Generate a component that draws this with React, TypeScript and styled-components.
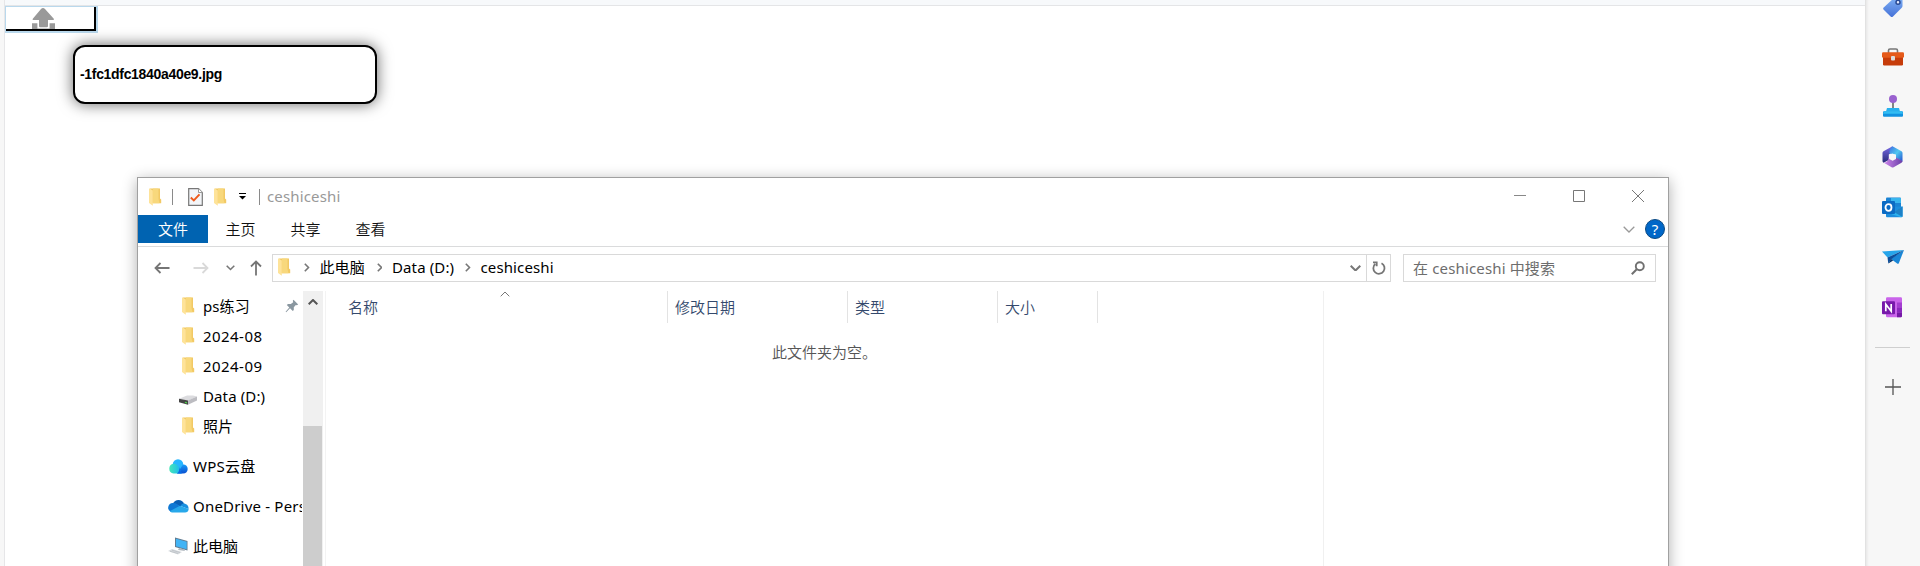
import React from "react";
import styled, { createGlobalStyle } from "styled-components";

const GlobalStyle = createGlobalStyle`
  * { box-sizing: border-box; }
  body { margin: 0; background: #fff; overflow: hidden; }
  svg { display: block; flex: none; }
`;

const uiFont = `"Noto Sans", "Noto Sans CJK SC", sans-serif`;
const cjkFont = `"Noto Sans CJK SC", "Noto Sans", sans-serif`;

const Browser = styled.div`
  display: flex;
  width: 1920px;
  height: 566px;
  background: #f7f7f7;
  overflow: hidden;
  font-family: ${uiFont};
`;

const Page = styled.main`
  position: relative;
  flex: 1;
  margin-left: 4px;
  border-left: 1px solid #e6e6e8;
  border-right: 1px solid #e2e2e2;
  background: #fff;
`;

const TopStrip = styled.div`
  height: 6px;
  background: #f7f9fb;
  border-bottom: 1px solid #e4e5e7;
`;

const UploadFrame = styled.div`
  width: 93px;
  height: 27px;
  border: solid #b9d8ec;
  border-width: 1px 2px 2px 1px;
`;

const UploadButton = styled.button`
  display: block;
  width: 100%;
  height: 100%;
  padding: 1px 0 0 26px;
  border: solid #000;
  border-width: 0 2px 2px 0;
  background: #fff;
  overflow: hidden;
`;

const FileCard = styled.div`
  position: absolute;
  left: 68px;
  top: 45px;
  width: 304px;
  height: 59px;
  display: flex;
  align-items: center;
  padding: 0 5px 2px;
  border: 2px solid #000;
  border-radius: 12px;
  background: #fff;
  box-shadow: 0 0 15px rgba(0, 0, 0, 0.6);
  font: bold 14px "Liberation Sans", Arial, sans-serif;
  letter-spacing: -0.32px;
  color: #000;
`;

const Explorer = styled.section`
  position: absolute;
  left: 132px;
  top: 177px;
  width: 1532px;
  height: 600px;
  display: flex;
  flex-direction: column;
  border: 1px solid #a0a0a0;
  background: #fff;
  box-shadow: 0 3px 14px rgba(0, 0, 0, 0.32);
  font-size: 15px;
  line-height: 20px;
  color: #000;
`;

const TitleBar = styled.header`
  display: flex;
  align-items: center;
  height: 37px;
  padding: 0 24px 0 11px;
`;

const TitleMark = styled.i<{ $ml: number; $mr: number }>`
  width: 1px;
  height: 16px;
  margin: 0 ${(p) => p.$mr}px 0 ${(p) => p.$ml}px;
  background: #8a8a8a;
`;

const TitleText = styled.span`
  padding-bottom: 2px;
  color: #999;
  letter-spacing: 0.15px;
`;

const WindowControls = styled.div`
  display: flex;
  gap: 47px;
  margin-left: auto;
  padding-bottom: 1px;
`;

const Ribbon = styled.nav`
  display: flex;
  align-items: center;
  height: 32px;
  padding: 0 3px 3px 0;
  border-bottom: 1px solid #dadbdc;
`;

const Tab = styled.span<{ $active?: boolean }>`
  width: ${(p) => (p.$active ? 70 : 65)}px;
  height: 28px;
  line-height: 28px;
  text-align: center;
  background: ${(p) => (p.$active ? "#0063b1" : "transparent")};
  color: ${(p) => (p.$active ? "#fff" : "#111")};
  font-family: ${cjkFont};
  font-weight: 350;
`;

const RibbonEnd = styled.div`
  display: flex;
  align-items: center;
  gap: 10px;
  margin-left: auto;
`;

const HelpBadge = styled.span`
  width: 20px;
  height: 20px;
  border-radius: 50%;
  border: 1px solid #0b4a84;
  background: #0067c8;
  color: #fff;
  text-align: center;
  font-size: 15px;
  line-height: 18px;
`;

const AddressRow = styled.div`
  display: flex;
  align-items: center;
  height: 44px;
  padding: 0 12px 2px 16px;
`;

const NavButtons = styled.div`
  display: flex;
  align-items: center;
  width: 118px;
`;

const Field = styled.div<{ $w: number }>`
  display: flex;
  align-items: center;
  width: ${(p) => p.$w}px;
  height: 28px;
  border: 1px solid #d9d9d9;
`;

const AddressField = styled(Field)`
  padding-left: 5px;
`;

const AddressPath = styled.div`
  display: flex;
  align-items: center;
  padding-bottom: 2px;
`;

const SearchField = styled(Field)`
  margin-left: 12px;
  padding: 0 10px 0 9px;
  color: #6d6d6d;
  letter-spacing: 0.15px;
  justify-content: space-between;
`;

const Crumb = styled.span<{ $w: number }>`
  width: ${(p) => p.$w}px;
  margin: 0 11px 0 10px;
  letter-spacing: 0.12px;
  white-space: nowrap;
`;

const AddressEnd = styled.div`
  display: flex;
  align-items: center;
  align-self: stretch;
  margin-left: auto;
`;

const RefreshCell = styled.div`
  display: flex;
  align-items: center;
  justify-content: center;
  align-self: stretch;
  width: 24px;
  margin-left: 5px;
  border-left: 1px solid #d9d9d9;
`;

const Body = styled.div`
  display: flex;
  flex: 1;
  min-height: 0;
`;

const Tree = styled.aside`
  width: 164px;
  overflow: hidden;
`;

const TreeRow = styled.div<{ $root?: boolean }>`
  display: flex;
  align-items: center;
  height: 30px;
  margin-top: ${(p) => (p.$root ? 10 : 0)}px;
  padding-left: ${(p) => (p.$root ? 29 : 39)}px;
  white-space: nowrap;
`;

const TreeIcon = styled.span<{ $drop?: number }>`
  display: flex;
  justify-content: center;
  flex: none;
  width: 22px;
  margin-right: 4px;
  padding-top: ${(p) => p.$drop ?? 0}px;
`;

const TreeLabel = styled.span<{ $track?: number }>`
  padding-bottom: 1px;
  letter-spacing: ${(p) => p.$track ?? 0}px;
`;

const PinSlot = styled.span`
  margin-left: auto;
  margin-right: 3px;
`;

const Scrollbar = styled.div`
  width: 20px;
  margin-left: 1px;
  background: #f0f0f0;
`;

const ScrollUp = styled.div`
  display: flex;
  justify-content: center;
  height: 135px;
  padding-top: 8px;
`;

const ScrollThumb = styled.div`
  width: 19px;
  height: 400px;
  background: #cdcdcd;
`;

const FileList = styled.div`
  display: flex;
  flex-direction: column;
  width: 999px;
  margin-left: 2px;
  border-left: 1px solid #f3f3f3;
  border-right: 1px solid #f0f0f0;
  font-family: ${cjkFont};
  font-weight: 350;
`;

const Columns = styled.div`
  display: flex;
  height: 32px;
`;

const Column = styled.div<{ $w: number; $pad: number }>`
  position: relative;
  width: ${(p) => p.$w}px;
  padding-left: ${(p) => p.$pad}px;
  border-right: 1px solid #e3e3e3;
  line-height: 32px;
  color: #34496c;
`;

const SortMark = styled.span`
  position: absolute;
  left: 174px;
  top: 0;
`;

const EmptyNote = styled.p`
  margin: 19px 0 0 446px;
  color: #555;
`;

const EdgeBar = styled.aside`
  display: flex;
  flex-direction: column;
  align-items: center;
  width: 54px;
  padding-right: 1px;
  background: #f7f7f7;
  box-shadow: inset 3px 0 3px -2px rgba(0, 0, 0, 0.08);
`;

const EdgeSlot = styled.div`
  display: flex;
  align-items: center;
  justify-content: center;
  flex: none;
  height: 50px;
  &:first-child { margin-top: -18px; }
`;

const EdgeRule = styled.i`
  width: 35px;
  height: 1px;
  margin: 15px 0 31px;
  background: #cfcfcf;
`;

const Gap = styled.i<{ $w: number }>`
  flex: none;
  width: ${(p) => p.$w}px;
`;

const Folder = () => (
  <svg width="13" height="18" viewBox="0 0 13 18">
    <path d="M1 .5H11V10.5L12.2 11.5V15.2H3Z" fill="#f2c964" />
    <path d="M4 .5H9.5V11L10.5 15.2H4Z" fill="#f8d87c" />
    <path d="M0 .3L3.8 2.5V17.8L0 15Z" fill="#fee399" />
  </svg>
);

const CheckDoc = () => (
  <svg width="15" height="18" viewBox="0 0 15 18">
    <path d="M.7.7H10.5L14.3 4.5V17.3H.7Z" fill="#f3f5f8" stroke="#777" strokeWidth="1.2" />
    <path d="M10.5.7V4.5H14.3" fill="#fff" stroke="#999" />
    <path d="M2.8 9.5L5.8 12.5L11.5 6.3" fill="none" stroke="#ee5a1c" strokeWidth="1.9" />
  </svg>
);

const Chevron = ({ dir, w = 10, color = "#666", sw = 1.6 }: { dir: "up" | "down" | "right"; w?: number; color?: string; sw?: number }) => {
  const h = w / 2 + 1;
  const paths = {
    up: `M.7 ${h - 0.7}L${w / 2} 1L${w - 0.7} ${h - 0.7}`,
    down: `M.7 .8L${w / 2} ${h - 1}L${w - 0.7} .8`,
    right: `M.8 .7L${h - 1} ${w / 2}L.8 ${w - 0.7}`,
  };
  const side = dir === "right";
  return (
    <svg width={side ? h : w} height={side ? w : h}>
      <path d={paths[dir]} fill="none" stroke={color} strokeWidth={sw} />
    </svg>
  );
};

const Arrow = ({ dir, color }: { dir: "left" | "right" | "up"; color: string }) => {
  const turn = { left: 0, up: 90, right: 180 }[dir];
  return (
    <svg width="16" height="16" viewBox="0 0 16 16">
      <path transform={`rotate(${turn} 8 8)`} d="M15.5 8H1.5M6.5 3L1.5 8L6.5 13" fill="none" stroke={color} strokeWidth="1.8" />
    </svg>
  );
};

const Drive = () => (
  <svg width="18" height="10" viewBox="0 0 18 10">
    <path d="M0 3.8L8 .5H14L18 1.5L9 5.8Z" fill="#dcdcdf" />
    <path d="M9 5.6L18 1.5V5.5L9 9.8Z" fill="#bcbcc1" />
    <path d="M0 3.8L9 5.6V9.8L0 7.2Z" fill="#444" />
    <path d="M6 7.3L8 7.8" stroke="#4fd04a" strokeWidth="1.3" />
  </svg>
);

const WpsCloud = () => (
  <svg width="20" height="15" viewBox="0 0 20 15">
    <defs>
      <linearGradient id="wpsA"><stop stopColor="#45e8b8" /><stop offset="1" stopColor="#18b4f4" /></linearGradient>
      <linearGradient id="wpsB" x1="0" y1="0" x2="0" y2="1"><stop stopColor="#189bf8" /><stop offset="1" stopColor="#0a4fd0" /></linearGradient>
    </defs>
    <circle cx="10" cy="5.5" r="5.3" fill="#27b6ff" />
    <path d="M9 14.5L15 5.5C18 5.5 19.7 7.6 19.7 10S18 14.5 15 14.5Z" fill="url(#wpsB)" />
    <path d="M5.5 4.8C9 4.8 10.5 7 12 10.5L13.5 14.5H5.5A4.9 4.9 0 0 1 5.5 4.8Z" fill="url(#wpsA)" />
    <path d="M11 8L13.8 14.5H9C11 13 11.8 11 11 8Z" fill="#0b66e6" />
  </svg>
);

const OneDrive = () => (
  <svg width="21" height="14" viewBox="0 0 21 14">
    <path d="M5 4.5A6 6 0 0 1 16 4.5L12.5 7.5L5 4.5Z" fill="#0a5fb4" />
    <path d="M4.8 4C8 3.5 9 5.5 13 7.5L3 13A4.7 4.7 0 0 1 4.8 4Z" fill="#0f78d4" />
    <path d="M12.5 7C14 4.5 16 4 17.5 5C20 6 20.7 7.5 20.5 10Z" fill="#1890e0" />
    <path d="M2 12L12 6.8L20.7 10C20.5 12.5 19 13.5 17 13.5H5C3.5 13.5 2.5 13 2 12Z" fill="#28a8ea" />
  </svg>
);

const Computer = () => (
  <svg width="20" height="18" viewBox="0 0 20 18">
    <path d="M7 .5L19.5 4V13.5L7 10Z" fill="#607b90" />
    <path d="M8 1.8L18.7 4.7V12.2L8 9.2Z" fill="#42b4f5" />
    <path d="M11 11L16 12.3L17 14L10 13Z" fill="#aeb6bd" />
    <path d="M0 14L4 12L14 15L10 17.5Z" fill="#d6dade" />
    <path d="M2 14.3L10 16.5M4 13.2L12 15.5" stroke="#b3b9be" strokeWidth=".6" />
  </svg>
);

const Pin = () => (
  <svg width="14" height="14" viewBox="0 0 14 14">
    <path d="M8.5.8L13.2 5.5L11.8 6.2L10.8 6L8.8 8.3L8.8 11L7.8 12L5 9.2L1.2 13.2L.6 12.8L4.3 8.5L1.8 6L3 5H5.8L8.2 3.2L7.8 1.8Z" fill="#8a97a0" />
  </svg>
);

const UploadGlyph = () => (
  <svg width="23" height="22" viewBox="0 0 23 22">
    <path d="M11 0Q12 0 13 1L21.8 10.8Q22.5 12 21 12H16V18Q16 19.2 14.8 19.2H8.2Q7 19.2 7 18V12H1.3Q0 12 .8 10.8L9 1Q10 0 11 0Z" fill="#999" />
    <path d="M0 15.2H5.4V20.4H17.6V15.2H23V22H0Z" fill="#999" />
  </svg>
);

const Tag = () => (
  <svg width="22" height="22" viewBox="0 0 22 22">
    <defs><linearGradient id="tag" x1="0" y1="0" x2="0" y2="1"><stop stopColor="#7eb0f4" /><stop offset="1" stopColor="#4672d8" /></linearGradient></defs>
    <path d="M12 2L19 1.5Q20.5 1.5 20.5 3V10Q20.5 11 19.5 12L11 20.5Q9.8 21.5 8.6 20.5L1.7 13.8Q.6 12.6 1.7 11.4Z" fill="url(#tag)" />
    <circle cx="16" cy="6.3" r="2" fill="#e4ecff" stroke="#294a94" strokeWidth="1.5" />
  </svg>
);

const Toolbox = () => (
  <svg width="22" height="18" viewBox="0 0 22 18">
    <path d="M6.5 5V2.5Q6.5 1 8 1H14Q15.5 1 15.5 2.5V5" fill="none" stroke="#777" strokeWidth="1.6" />
    <rect x="1" y="8" width="20" height="9.5" rx="1.2" fill="#c63c0a" />
    <rect y="4.2" width="22" height="5.6" rx="1.2" fill="#e55a1a" />
    <rect x="9" y="8" width="4" height="4.6" rx="1" fill="#dcdcdc" />
  </svg>
);

const Joystick = () => (
  <svg width="22" height="24" viewBox="0 0 22 24">
    <path d="M11 7V15" stroke="#777" strokeWidth="1.8" />
    <circle cx="11" cy="4.1" r="4" fill="#9a62cf" />
    <path d="M5 13H17L18 16.5H4Z" fill="#28b1ee" />
    <rect x="1" y="16.2" width="20" height="5.6" rx="1" fill="#1292e0" />
    <path d="M2 16.2H20L21 18.8H1Z" fill="#32bdf3" />
  </svg>
);

const M365 = () => (
  <svg width="21" height="22" viewBox="0 0 21 22">
    <defs>
      <linearGradient id="mA" x1="0" y1="0" x2="0" y2="1"><stop stopColor="#7a6ae6" /><stop offset="1" stopColor="#262a78" /></linearGradient>
      <linearGradient id="mB" x1="0" y1="0" x2="1" y2="1"><stop stopColor="#3b6fe0" /><stop offset=".5" stopColor="#50c8f0" /><stop offset="1" stopColor="#2450d0" /></linearGradient>
      <linearGradient id="mC" x1="0" y1="0" x2="1" y2="0"><stop stopColor="#d48af0" /><stop offset="1" stopColor="#6a3fa8" /></linearGradient>
    </defs>
    <path d="M10.5 .3L1.5 5.3Q.5 6 .5 7V15Q.5 16.3 1.5 16.7L6.8 14V8.5L12.5 5Z" fill="url(#mA)" />
    <path d="M10 .5Q10.6 .2 11.4 .7L19.5 5.3Q20.5 6 20.5 7V15.5L14 12V8.5L7.5 7.5Q7 3 10 .5Z" fill="url(#mB)" />
    <path d="M1 16.2Q5.5 17.5 6.8 12L10.5 14.2L14 11.5L20.5 15Q20.4 16.3 19.5 16.8L11.6 21.3Q10.6 21.8 9.6 21.3Z" fill="url(#mC)" />
    <path d="M10.6 7.4L14 9.2V12.9L10.6 14.7L7.2 12.9V9.2Z" fill="#f7f7f7" />
  </svg>
);

const Outlook = () => (
  <svg width="21" height="21" viewBox="0 0 21 21">
    <rect x="4" y=".5" width="15" height="12" rx="1" fill="#1a83d4" />
    <rect x="9" y="1" width="10" height="5" fill="#38b5ee" />
    <path d="M4 10L20.5 9.5V19Q20.5 20.3 19 20.3H5Q4 20.3 4 19Z" fill="#1c8ddd" />
    <path d="M20.5 9.5L9 17L19 20.3Q20.5 20.3 20.5 19Z" fill="#2bb0ee" />
    <path d="M12 15L20.5 20V9.5Z" fill="#125ba8" opacity=".55" />
    <rect y="4" width="13" height="13" rx="1" fill="#0b6bc4" />
    <ellipse cx="6.5" cy="10.5" rx="3" ry="3.3" fill="none" stroke="#fff" strokeWidth="1.8" />
  </svg>
);

const Plane = () => (
  <svg width="22" height="16" viewBox="0 0 22 16">
    <path d="M0 2.5L22 1L5.5 8.5Z" fill="#27a5ea" />
    <path d="M22 1L9 10L15.5 14.7Q16.3 15 16.8 14.2Z" fill="#1a86d6" />
    <path d="M22 1L5.5 8.5L6.3 14.5L9 10.5Z" fill="#0c4f9c" />
    <path d="M6.3 14.5L9 10L11.2 11.6Z" fill="#07356e" />
  </svg>
);

const OneNote = () => (
  <svg width="21" height="21" viewBox="0 0 21 21">
    <rect x="4" y=".3" width="16" height="20" rx="1.2" fill="#c964ea" />
    <path d="M15 5.5H20V10.5H15Z" fill="#a43ed0" />
    <path d="M15 10.5H20V15.5H15Z" fill="#8b28bd" />
    <path d="M15 15.5H20V19Q20 20.3 18.8 20.3H15Z" fill="#7519a6" />
    <rect y="4.2" width="13" height="13" rx="1" fill="#7719aa" />
    <path d="M3.8 14.3V7.2L9.2 14.2V7.1" fill="none" stroke="#fff" strokeWidth="1.7" />
  </svg>
);

const edgeApps = [Tag, Toolbox, Joystick, M365, Outlook, Plane, OneNote];

const treeItems = [
  { label: "ps练习", icon: <Folder />, pinned: true, track: 0.1 },
  { label: "2024-08", icon: <Folder />, track: 0.45 },
  { label: "2024-09", icon: <Folder />, track: 0.45 },
  { label: "Data (D:)", icon: <Drive />, track: 0.12, drop: 8 },
  { label: "照片", icon: <Folder /> },
  { label: "WPS云盘", icon: <WpsCloud />, root: true, track: 0.25 },
  { label: "OneDrive - Personal", icon: <OneDrive />, root: true, track: 0.2 },
  { label: "此电脑", icon: <Computer />, root: true },
];

export default function App() {
  return (
    <Browser>
      <GlobalStyle />
      <Page>
        <TopStrip />
        <UploadFrame>
          <UploadButton aria-label="upload"><UploadGlyph /></UploadButton>
        </UploadFrame>
        <FileCard>-1fc1dfc1840a40e9.jpg</FileCard>
        <Explorer>
          <TitleBar>
            <Folder />
            <TitleMark $ml={10} $mr={15} />
            <CheckDoc />
            <Gap $w={11} />
            <Folder />
            <Gap $w={12} />
            <svg width="7" height="7"><path d="M0 .5H7" stroke="#000" /><path d="M0 3H7L3.5 6.5Z" fill="#000" /></svg>
            <TitleMark $ml={13} $mr={7} />
            <TitleText>ceshiceshi</TitleText>
            <WindowControls>
              <svg width="12" height="12"><path d="M0 5.5H12" stroke="#888" /></svg>
              <svg width="12" height="12"><path d="M.5.5H11.5V11.5H.5Z" fill="none" stroke="#777" /></svg>
              <svg width="12" height="12"><path d="M0 0L12 12M12 0L0 12" stroke="#777" /></svg>
            </WindowControls>
          </TitleBar>
          <Ribbon>
            <Tab $active>文件</Tab>
            <Tab>主页</Tab>
            <Tab>共享</Tab>
            <Tab>查看</Tab>
            <RibbonEnd>
              <Chevron dir="down" w={12} color="#999" sw={1.3} />
              <HelpBadge>?</HelpBadge>
            </RibbonEnd>
          </Ribbon>
          <AddressRow>
            <NavButtons>
              <Arrow dir="left" color="#757575" />
              <Gap $w={23} />
              <Arrow dir="right" color="#d9d9d9" />
              <Gap $w={17} />
              <Chevron dir="down" w={9} color="#777" />
              <Gap $w={13} />
              <Arrow dir="up" color="#757575" />
            </NavButtons>
            <AddressField $w={1119}>
              <AddressPath>
                <Folder />
                <Gap $w={13} />
                <Chevron dir="right" w={9} color="#777" />
                <Crumb $w={45}>此电脑</Crumb>
                <Gap $w={1} />
                <Chevron dir="right" w={9} color="#777" />
                <Crumb $w={62}>Data (D:)</Crumb>
                <Chevron dir="right" w={9} color="#777" />
                <Crumb $w={80}>ceshiceshi</Crumb>
              </AddressPath>
              <AddressEnd>
                <Chevron dir="down" w={11} color="#777" sw={2} />
                <RefreshCell>
                  <svg width="14" height="14" viewBox="0 0 14 14">
                    <path d="M9.5 2.2A5.6 5.6 0 1 1 3.2 3M1 1.3H4.7V5.2" fill="none" stroke="#757575" strokeWidth="1.8" />
                  </svg>
                </RefreshCell>
              </AddressEnd>
            </AddressField>
            <SearchField $w={253}>
              <span>在 ceshiceshi 中搜索</span>
              <svg width="14" height="14" viewBox="0 0 14 14">
                <circle cx="8.8" cy="5.2" r="4" fill="none" stroke="#707070" strokeWidth="1.9" />
                <path d="M6 8L.8 13.2" stroke="#707070" strokeWidth="2" />
              </svg>
            </SearchField>
          </AddressRow>
          <Body>
            <Tree>
              {treeItems.map((item) => (
                <TreeRow key={item.label} $root={item.root}>
                  <TreeIcon $drop={item.drop}>{item.icon}</TreeIcon>
                  <TreeLabel $track={item.track}>{item.label}</TreeLabel>
                  {item.pinned && <PinSlot><Pin /></PinSlot>}
                </TreeRow>
              ))}
            </Tree>
            <Scrollbar>
              <ScrollUp><Chevron dir="up" w={10} color="#555" sw={2} /></ScrollUp>
              <ScrollThumb />
            </Scrollbar>
            <FileList>
              <Columns>
                <Column $w={342} $pad={22}>名称<SortMark><Chevron dir="up" w={10} color="#777" sw={1} /></SortMark></Column>
                <Column $w={180} $pad={7}>修改日期</Column>
                <Column $w={150} $pad={7}>类型</Column>
                <Column $w={100} $pad={7}>大小</Column>
              </Columns>
              <EmptyNote>此文件夹为空。</EmptyNote>
            </FileList>
          </Body>
        </Explorer>
      </Page>
      <EdgeBar>
        {edgeApps.map((Icon, i) => (
          <EdgeSlot key={i}><Icon /></EdgeSlot>
        ))}
        <EdgeRule />
        <svg width="16" height="16"><path d="M8 0V16M0 8H16" stroke="#555" strokeWidth="1.3" /></svg>
      </EdgeBar>
    </Browser>
  );
}
